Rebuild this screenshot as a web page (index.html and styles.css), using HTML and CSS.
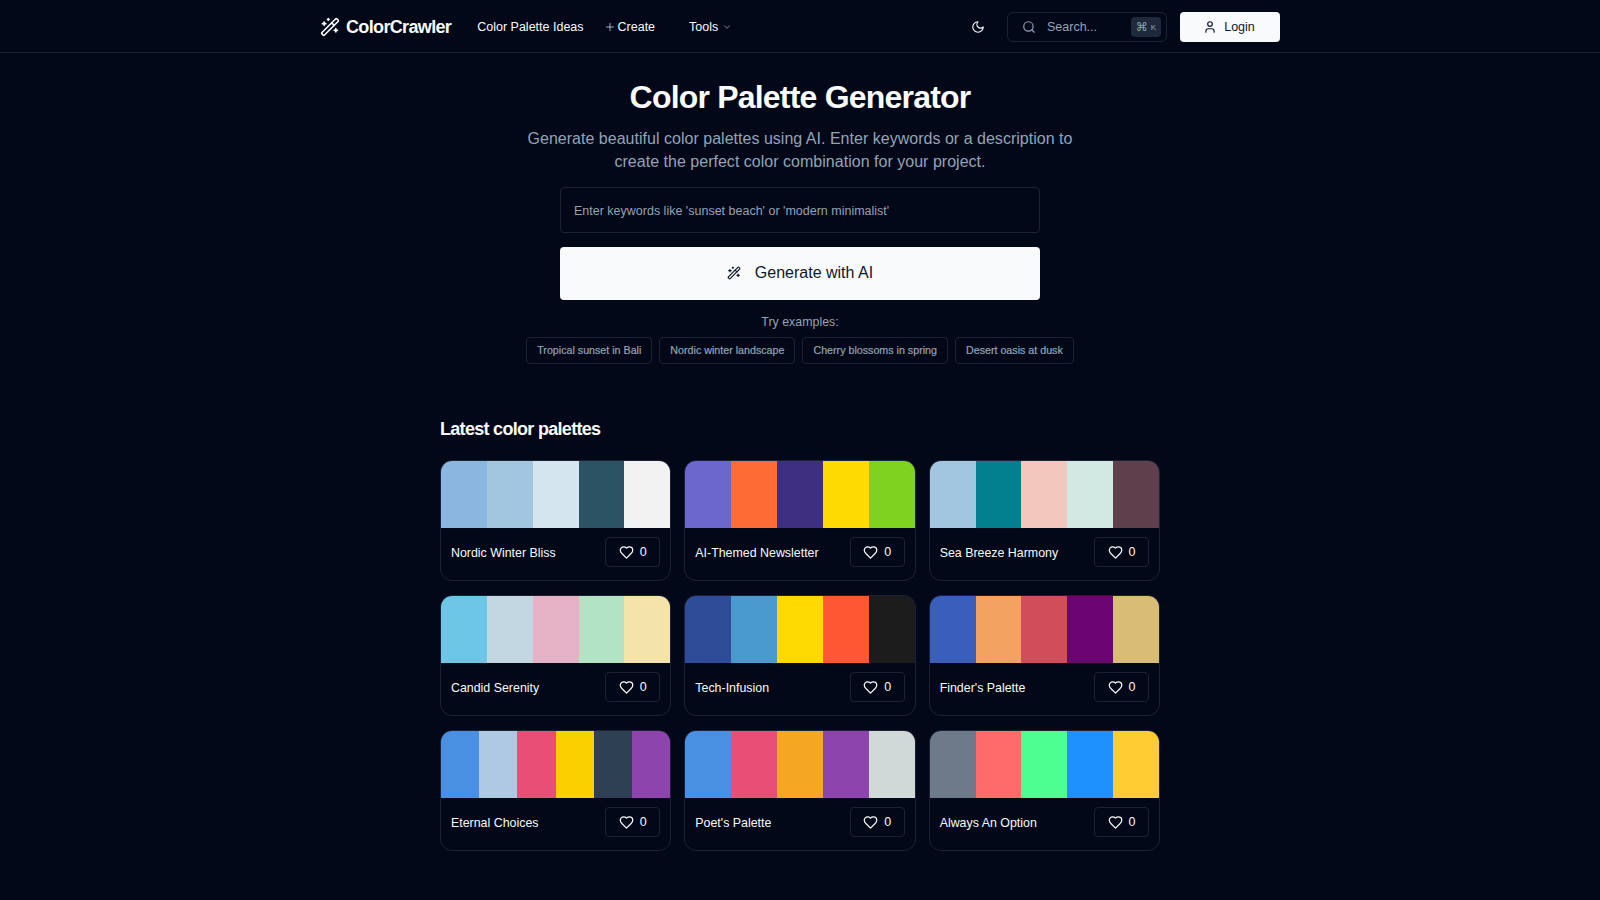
FILE: index.html
```html
<!DOCTYPE html>
<html lang="en">
<head>
    <meta charset="UTF-8">
    <meta name="viewport" content="width=device-width, initial-scale=1.0">
    <title>Color Palette Generator</title>
    <link rel="stylesheet" href="styles.css">
</head>
<body>

<svg class="icon-defs" aria-hidden="true">
    <symbol id="i-wand" viewBox="0 0 24 24"><path d="m21.64 3.64-1.28-1.28a1.21 1.21 0 0 0-1.72 0L2.36 18.64a1.21 1.21 0 0 0 0 1.72l1.28 1.28a1.2 1.2 0 0 0 1.72 0L21.64 5.36a1.2 1.2 0 0 0 0-1.72"/><path d="m14 7 3 3"/><path d="M5 6v4"/><path d="M19 14v4"/><path d="M10 2v2"/><path d="M7 8H3"/><path d="M21 16h-4"/><path d="M11 3H9"/></symbol>
    <symbol id="i-heart" viewBox="0 0 24 24"><path d="M19 14c1.49-1.46 3-3.21 3-5.5A5.5 5.5 0 0 0 16.5 3c-1.76 0-3 .5-4.5 2-1.5-1.5-2.74-2-4.5-2A5.5 5.5 0 0 0 2 8.5c0 2.3 1.5 4.05 3 5.5l7 7Z"/></symbol>
</svg>

<header class="site-header">
    <div class="header-inner">
        <a href="#" class="logo">
            <svg class="logo-icon"><use href="#i-wand"/></svg>
            <span>ColorCrawler</span>
        </a>
        <nav class="main-nav">
            <a href="#" class="nav-link">Color Palette Ideas</a>
            <a href="#" class="nav-link nav-create">
                <svg class="plus-icon" viewBox="0 0 24 24"><path d="M5 12h14"/><path d="M12 5v14"/></svg>
                Create
            </a>
            <a href="#" class="nav-link nav-tools">
                Tools
                <svg class="chevron-icon" viewBox="0 0 24 24"><path d="m6 9 6 6 6-6"/></svg>
            </a>
        </nav>
        <div class="header-actions">
            <button class="theme-btn" type="button" aria-label="Toggle theme">
                <svg class="moon-icon" viewBox="0 0 24 24"><path d="M12 3a6 6 0 0 0 9 9 9 9 0 1 1-9-9Z"/></svg>
            </button>
            <button class="search-btn" type="button">
                <svg class="search-icon" viewBox="0 0 24 24"><circle cx="11" cy="11" r="8"/><path d="m21 21-4.3-4.3"/></svg>
                <span class="search-label">Search...</span>
                <kbd class="search-kbd"><span class="kbd-cmd">⌘</span><span class="kbd-key">K</span></kbd>
            </button>
            <button class="login-btn" type="button">
                <svg class="user-icon" viewBox="0 0 24 24"><path d="M19 21v-2a4 4 0 0 0-4-4H9a4 4 0 0 0-4 4v2"/><circle cx="12" cy="7" r="4"/></svg>
                Login
            </button>
        </div>
    </div>
</header>

<main class="page">
    <section class="hero">
        <h1>Color Palette Generator</h1>
        <p class="hero-sub">Generate beautiful color palettes using AI. Enter keywords or a description to create the perfect color combination for your project.</p>
        <form class="generate-form">
            <input class="keyword-input" type="text" placeholder="Enter keywords like 'sunset beach' or 'modern minimalist'">
            <button class="generate-btn" type="button">
                <svg class="generate-icon"><use href="#i-wand"/></svg>
                Generate with AI
            </button>
        </form>
        <p class="try-label">Try examples:</p>
        <div class="examples">
            <button class="chip" type="button">Tropical sunset in Bali</button>
            <button class="chip" type="button">Nordic winter landscape</button>
            <button class="chip" type="button">Cherry blossoms in spring</button>
            <button class="chip" type="button">Desert oasis at dusk</button>
        </div>
    </section>

    <section class="latest">
        <h2>Latest color palettes</h2>
        <div class="palette-grid">

            <article class="palette-card">
                <div class="swatches">
                    <span style="background:#8ab6e0"></span><span style="background:#a3c6e0"></span><span style="background:#d4e5f0"></span><span style="background:#2c5364"></span><span style="background:#f2f2f2"></span>
                </div>
                <div class="card-foot">
                    <span class="card-name">Nordic Winter Bliss</span>
                    <button class="like-btn" type="button"><svg class="heart-icon"><use href="#i-heart"/></svg>0</button>
                </div>
            </article>

            <article class="palette-card">
                <div class="swatches">
                    <span style="background:#6c67cc"></span><span style="background:#ff6b35"></span><span style="background:#3d2e80"></span><span style="background:#ffd900"></span><span style="background:#7ed321"></span>
                </div>
                <div class="card-foot">
                    <span class="card-name">AI-Themed Newsletter</span>
                    <button class="like-btn" type="button"><svg class="heart-icon"><use href="#i-heart"/></svg>0</button>
                </div>
            </article>

            <article class="palette-card">
                <div class="swatches">
                    <span style="background:#a3c6e0"></span><span style="background:#028090"></span><span style="background:#f4c7be"></span><span style="background:#d2e8e3"></span><span style="background:#5e3f4b"></span>
                </div>
                <div class="card-foot">
                    <span class="card-name">Sea Breeze Harmony</span>
                    <button class="like-btn" type="button"><svg class="heart-icon"><use href="#i-heart"/></svg>0</button>
                </div>
            </article>

            <article class="palette-card">
                <div class="swatches">
                    <span style="background:#6ec6e6"></span><span style="background:#c3d7e3"></span><span style="background:#e5b1c4"></span><span style="background:#b2e3c4"></span><span style="background:#f5e3ac"></span>
                </div>
                <div class="card-foot">
                    <span class="card-name">Candid Serenity</span>
                    <button class="like-btn" type="button"><svg class="heart-icon"><use href="#i-heart"/></svg>0</button>
                </div>
            </article>

            <article class="palette-card">
                <div class="swatches">
                    <span style="background:#2e4c97"></span><span style="background:#4a9ad0"></span><span style="background:#ffd900"></span><span style="background:#ff5733"></span><span style="background:#1c1c1c"></span>
                </div>
                <div class="card-foot">
                    <span class="card-name">Tech-Infusion</span>
                    <button class="like-btn" type="button"><svg class="heart-icon"><use href="#i-heart"/></svg>0</button>
                </div>
            </article>

            <article class="palette-card">
                <div class="swatches">
                    <span style="background:#3a5fbb"></span><span style="background:#f4a261"></span><span style="background:#d14d5a"></span><span style="background:#6a0572"></span><span style="background:#d9bc76"></span>
                </div>
                <div class="card-foot">
                    <span class="card-name">Finder's Palette</span>
                    <button class="like-btn" type="button"><svg class="heart-icon"><use href="#i-heart"/></svg>0</button>
                </div>
            </article>

            <article class="palette-card">
                <div class="swatches">
                    <span style="background:#4a90e2"></span><span style="background:#b0c9e3"></span><span style="background:#e94f76"></span><span style="background:#f9d100"></span><span style="background:#2e4053"></span><span style="background:#8e44ad"></span>
                </div>
                <div class="card-foot">
                    <span class="card-name">Eternal Choices</span>
                    <button class="like-btn" type="button"><svg class="heart-icon"><use href="#i-heart"/></svg>0</button>
                </div>
            </article>

            <article class="palette-card">
                <div class="swatches">
                    <span style="background:#4a90e2"></span><span style="background:#e94f76"></span><span style="background:#f5a623"></span><span style="background:#8e44ad"></span><span style="background:#d0d8d8"></span>
                </div>
                <div class="card-foot">
                    <span class="card-name">Poet's Palette</span>
                    <button class="like-btn" type="button"><svg class="heart-icon"><use href="#i-heart"/></svg>0</button>
                </div>
            </article>

            <article class="palette-card">
                <div class="swatches">
                    <span style="background:#6c7a89"></span><span style="background:#ff6b6b"></span><span style="background:#4dff91"></span><span style="background:#1e90ff"></span><span style="background:#ffcc33"></span>
                </div>
                <div class="card-foot">
                    <span class="card-name">Always An Option</span>
                    <button class="like-btn" type="button"><svg class="heart-icon"><use href="#i-heart"/></svg>0</button>
                </div>
            </article>

        </div>
    </section>
</main>

</body>
</html>
```

FILE: styles.css
```css
* {
    box-sizing: border-box;
}
body {
    margin: 0;
    background-color: #020817;
    color: #f8fafc;
    font-family: "Liberation Sans", Arial, sans-serif;
}
a {
    color: inherit;
    text-decoration: none;
}
button {
    font-family: inherit;
    cursor: pointer;
}
svg {
    fill: none;
    stroke: currentColor;
    stroke-width: 2;
    stroke-linecap: round;
    stroke-linejoin: round;
    flex-shrink: 0;
}
.icon-defs {
    display: none;
}

/* header */
.site-header {
    height: 53px;
    padding-top: 2px;
    border-bottom: 1px solid #1a2336;
}
.header-inner {
    width: 960px;
    height: 100%;
    margin: 0 auto;
    display: flex;
    align-items: center;
}
.logo {
    display: flex;
    align-items: center;
    gap: 6px;
    font-size: 18px;
    font-weight: 700;
    letter-spacing: -0.65px;
}
.logo-icon {
    width: 20px;
    height: 20px;
}
.main-nav {
    display: flex;
    align-items: center;
    margin-left: 26px;
    font-size: 12.5px;
}
.nav-create {
    display: flex;
    align-items: center;
    gap: 2px;
    margin-left: 20px;
}
.plus-icon {
    width: 12px;
    height: 12px;
    stroke: #cbd5e1;
    stroke-width: 1.6;
}
.nav-tools {
    display: flex;
    align-items: center;
    gap: 4px;
    margin-left: 34px;
}
.chevron-icon {
    width: 10px;
    height: 10px;
    stroke: #94a3b8;
}
.header-actions {
    display: flex;
    align-items: center;
    margin-left: auto;
}
.theme-btn {
    display: flex;
    padding: 0;
    background: none;
    border: none;
    color: #f8fafc;
}
.moon-icon {
    width: 14px;
    height: 14px;
}
.search-btn {
    display: flex;
    align-items: center;
    width: 160px;
    height: 30px;
    margin-left: 22px;
    padding: 0 5px 0 14px;
    background: none;
    border: 1px solid #1a2336;
    border-radius: 6px;
    color: #94a3b8;
    font-size: 12.5px;
}
.search-icon {
    width: 14px;
    height: 14px;
}
.search-label {
    margin-left: 11px;
}
.search-kbd {
    display: flex;
    align-items: center;
    justify-content: center;
    gap: 3px;
    width: 30px;
    height: 20px;
    margin-left: auto;
    background-color: #1e293b;
    border-radius: 4px;
    font-family: inherit;
}
.kbd-cmd {
    font-family: "DejaVu Sans", sans-serif;
    font-size: 12px;
}
.kbd-key {
    font-size: 8px;
}
.login-btn {
    display: flex;
    align-items: center;
    justify-content: center;
    gap: 7px;
    width: 100px;
    height: 30px;
    margin-left: 13px;
    padding: 0 2px 0 0;
    background-color: #f8fafc;
    border: none;
    border-radius: 4px;
    color: #0f172a;
    font-size: 12.5px;
}
.user-icon {
    width: 14px;
    height: 14px;
}

/* hero */
.page {
    width: 720px;
    margin: 0 auto;
}
.hero {
    display: flex;
    flex-direction: column;
    align-items: center;
}
.hero h1 {
    margin: 24px 0 0;
    font-size: 32px;
    line-height: 40px;
    font-weight: 700;
    letter-spacing: -0.8px;
}
.hero-sub {
    width: 576px;
    margin: 10px 0 0;
    color: #94a3b8;
    font-size: 16px;
    line-height: 23px;
    letter-spacing: 0.02px;
    text-align: center;
}
.generate-form {
    display: flex;
    flex-direction: column;
    gap: 14px;
    width: 480px;
    margin-top: 14px;
}
.keyword-input {
    height: 46px;
    padding: 1px 13px 0;
    background: none;
    border: 1px solid #1a2336;
    border-radius: 4px;
    color: #f8fafc;
    font-family: inherit;
    font-size: 12.5px;
}
.keyword-input::placeholder {
    color: #94a3b8;
    opacity: 1;
}
.generate-btn {
    display: flex;
    align-items: center;
    justify-content: center;
    gap: 14px;
    height: 53px;
    padding: 0 0 1px;
    background-color: #f8fafc;
    border: none;
    border-radius: 4px;
    color: #0f172a;
    font-size: 16px;
}
.generate-icon {
    width: 14px;
    height: 14px;
}
.try-label {
    margin: 14px 0 0;
    color: #94a3b8;
    font-size: 12.4px;
    line-height: 16px;
}
.examples {
    display: flex;
    gap: 7px;
    margin-top: 7px;
}
.chip {
    height: 27px;
    padding: 0 10px 2px;
    background: none;
    border: 1px solid #1a2336;
    border-radius: 4px;
    color: #94a3b8;
    font-size: 10.7px;
    font-weight: 400;
    -webkit-text-stroke: 0.2px #94a3b8;
}

/* palettes */
.latest {
    margin-top: 51px;
}
.latest h2 {
    margin: 0;
    font-size: 18px;
    line-height: 28px;
    font-weight: 700;
    letter-spacing: -0.7px;
}
.palette-grid {
    display: grid;
    grid-template-columns: repeat(3, 1fr);
    column-gap: 13px;
    row-gap: 14px;
    margin-top: 17px;
}
.palette-card {
    height: 121px;
    border: 1px solid #1a2336;
    border-radius: 12px;
    overflow: hidden;
}
.swatches {
    display: flex;
    height: 67px;
}
.swatches span {
    flex: 1;
}
.card-foot {
    display: flex;
    align-items: center;
    justify-content: space-between;
    height: 48px;
    padding: 0 10px;
}
.card-name {
    margin-top: 1px;
    font-size: 12.4px;
}
.like-btn {
    display: flex;
    align-items: center;
    justify-content: center;
    gap: 6px;
    width: 55px;
    height: 30px;
    padding: 0;
    background: none;
    border: 1px solid #1a2336;
    border-radius: 4px;
    color: #f8fafc;
    font-size: 12.5px;
}
.heart-icon {
    width: 15px;
    height: 15px;
}
```
